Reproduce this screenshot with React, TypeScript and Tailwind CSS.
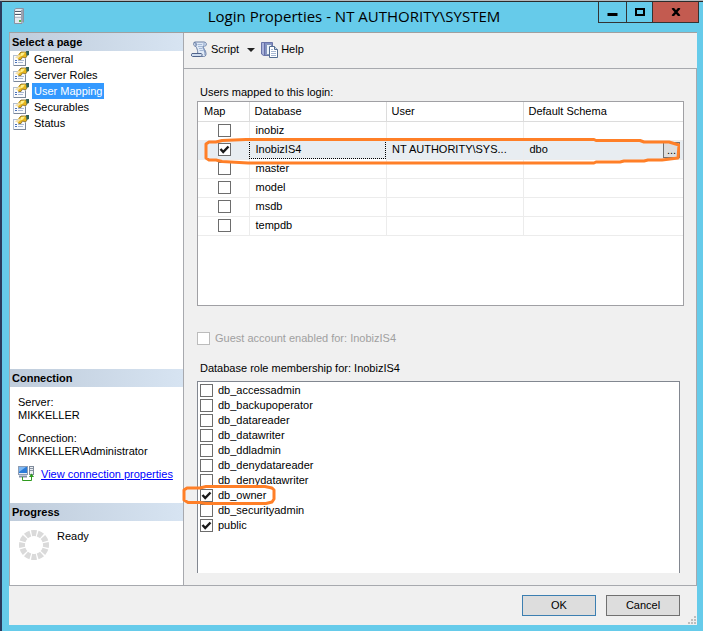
import React, { useState } from 'react';

const pages = ['General', 'Server Roles', 'User Mapping', 'Securables', 'Status'];

const databases = [
    { name: 'inobiz', user: '', schema: '' },
    { name: 'InobizIS4', user: 'NT AUTHORITY\\SYS...', schema: 'dbo' },
    { name: 'master', user: '', schema: '' },
    { name: 'model', user: '', schema: '' },
    { name: 'msdb', user: '', schema: '' },
    { name: 'tempdb', user: '', schema: '' },
];

const roles = [
    'db_accessadmin',
    'db_backupoperator',
    'db_datareader',
    'db_datawriter',
    'db_ddladmin',
    'db_denydatareader',
    'db_denydatawriter',
    'db_owner',
    'db_securityadmin',
    'public',
];

const ServerIcon = () => (
    <svg width="10" height="16" viewBox="0 0 10 16" aria-hidden="true">
        <path d="M0.5 1.5 L2 0.5 H9.5 V14 L8 15.5 H0.5 Z" fill="#e4e8ef" stroke="#8a93a2" />
        <path d="M7 2 L9 1 V14 L7 15 Z" fill="#9aa3b2" />
        <path d="M1 3.5 H7 M1 6.5 H7" stroke="#4d5969" />
        <path d="M1 4.5 H7 M1 7.5 H7" stroke="#ffffff" />
        <path d="M1 9.5 H7" stroke="#b4bcc9" />
        <rect x="5" y="12" width="2" height="2" fill="#55b948" />
    </svg>
);

const PageIcon = () => (
    <svg width="16" height="16" viewBox="0 0 16 16" className="shrink-0" aria-hidden="true">
        <rect x="0.5" y="4.5" width="12" height="10" fill="#fafbfd" stroke="#b3bfd0" />
        <path d="M1 14.5 H13 M12.5 8 V15" stroke="#7b8798" />
        <path d="M2 9.5 H4 M2 11.5 H4" stroke="#4b72b8" />
        <path d="M5 9.5 H11 M5 11.5 H10" stroke="#a9b9d2" />
        <path d="M5 4 L7.5 1 H13.5 L14.5 4.5 L12.5 7 L9.5 6 L8 8.5 L5.5 8.5 L4.5 7 Z" fill="#e8b71c" />
        <path d="M6 3.5 L8 1 H13.5 M14 5 L12.5 7 L9.5 6 L8 8.5 H5.5" fill="none" stroke="#7d6426" strokeWidth="0.8" />
        <path d="M8 2 L12 1.5 L10 4.5 L7 5.5 Z" fill="#fff08a" />
        <path d="M13 0 H16 V4 L13.5 5 Z" fill="#2e5f57" />
        <path d="M2 6.5 L6 3.5 L7.5 5 L5 7.5 Z" fill="#f3dfa6" />
    </svg>
);

const ScriptIcon = () => (
    <svg width="17" height="17" viewBox="0 0 17 17" aria-hidden="true">
        <path d="M3.5 1 H13 C16 1 16 5 14 5 H12 C12 8 15 9 15 12.5 C15 15 14 15.5 12.5 15.5 H5 C8 13 6.5 8.5 5 5.5 C3 5.5 1.5 3 3.5 1 Z" fill="#dfe9f6" stroke="#6a7ea3" />
        <path d="M3 1.5 C5.5 1 6 4 4.5 5.5" fill="#a9bad6" stroke="#6a7ea3" />
        <path d="M12.5 1.5 C11 3 11.5 4.5 14 5 L15 3 Z" fill="#b3c4de" />
        <path d="M12 5.5 C12.5 8.5 14.5 10 14 14" fill="none" stroke="#8398bd" strokeWidth="1.2" />
        <path d="M6.5 3.5 H11 M7 5.5 H11 M8 7.5 H11.5 M8.5 9.5 H12.5" stroke="#94aacb" strokeWidth="0.8" />
        <path d="M1 12.5 H10 C12 13 11 15.5 9.5 15.5 H1.5 C0 15 0 13 1 12.5 Z" fill="#cfdcee" stroke="#4f6289" />
    </svg>
);

const HelpIcon = () => (
    <svg width="17" height="17" viewBox="0 0 17 17" aria-hidden="true">
        <path d="M0.5 1.5 H11.5 V14.5 H2.5 L0.5 13 Z" fill="#8490c5" stroke="#6a74a8" />
        <path d="M1 2 H3 V14 L1 12.5 Z" fill="#aab3db" />
        <path d="M3.5 2 V14" stroke="#6670a6" />
        <path d="M5.5 3.5 H9.5 L11.5 5.5 V13.5 H5.5 Z" fill="#edf3fb" stroke="#8598bb" />
        <path d="M8.5 5.5 H13.5 L16.5 8.5 V16.5 H8.5 Z" fill="#ffffff" stroke="#546d91" />
        <path d="M13.5 5.5 V8.5 H16.5" fill="#ccd9ec" stroke="#546d91" />
        <path d="M10 8.5 H12 M10 10.5 H15 M10 12.5 H15 M10 14.5 H15" stroke="#a5b7d2" />
    </svg>
);

const ConnectionIcon = () => (
    <svg width="16" height="16" viewBox="0 0 16 16" className="shrink-0" aria-hidden="true">
        <rect x="0.5" y="0.5" width="9" height="8" fill="#e3e9f2" stroke="#8d9cb3" />
        <rect x="1" y="1" width="8" height="6" fill="#2b7bd8" />
        <path d="M1 1 H8 L1 6 Z" fill="#7fb8f2" />
        <path d="M1 10.5 H9" stroke="#8290a8" strokeWidth="2" />
        <rect x="11.5" y="0.5" width="4" height="8" fill="#edf0f4" stroke="#808b9b" />
        <path d="M12 2.5 H15 M12 4.5 H15" stroke="#8a95a5" />
        <path d="M4.5 11 V14.5 H13.5 V9" fill="none" stroke="#2f9b1f" />
        <path d="M11 11 L13.5 7.5 L16 11 Z" fill="#2f9b1f" />
    </svg>
);

interface CheckBoxProps {
    id?: string;
    label?: string;
    checked: boolean;
    disabled?: boolean;
    onChange?: () => void;
}

const CheckBox: React.FC<CheckBoxProps> = ({ id, label, checked, disabled, onChange }) => (
    <span className="inline-grid shrink-0 align-middle">
        <input
            id={id}
            type="checkbox"
            aria-label={label}
            checked={checked}
            disabled={disabled}
            onChange={onChange}
            className="peer col-start-1 row-start-1 size-[13px] appearance-none border border-[#6d6d6d] bg-white disabled:border-[#bcbcbc]"
        />
        <svg viewBox="0 0 13 13" className="pointer-events-none invisible col-start-1 row-start-1 size-[13px] peer-checked:visible" aria-hidden="true">
            <path d="M2.5 6 L5.2 9 L10.5 3.5" fill="none" stroke="#1a1a1a" strokeWidth="2.4" />
        </svg>
    </span>
);

const SectionTitle: React.FC<{ children: React.ReactNode }> = ({ children }) => (
    <h2 className="h-[18px] bg-linear-to-r from-[#bfccdb] to-[#d7e4f2] pl-[2px] font-bold leading-[18px]">{children}</h2>
);

export default function App() {
    const [page, setPage] = useState('User Mapping');
    const [mapped, setMapped] = useState(['InobizIS4']);
    const [granted, setGranted] = useState(['db_owner', 'public']);

    const toggle = (list: string[], item: string) =>
        list.includes(item) ? list.filter(i => i !== item) : [...list, item];

    return (
        <div className="flex min-h-screen flex-col border-t border-[#b5b8bb] bg-[#2b3a5c] pl-[2px] font-['Liberation_Sans',Arial,sans-serif] text-[11px] leading-[13px] text-black">
            <div className="flex flex-1 flex-col border-t border-[#2b2b2b] bg-[#66cbea] pr-1.5 pb-1.5 pl-[7px]">

                {/* Title bar */}
                <header className="-mr-[2px] grid h-[30px] grid-cols-[1fr_auto_1fr] items-start">
                    <div className="pt-1.5 pl-[5px]"><ServerIcon /></div>
                    <h1 className="font-['Open_Sans','Noto_Sans',sans-serif] text-[15px] leading-[29px]">
                        Login Properties - NT AUTHORITY\SYSTEM
                    </h1>
                    <div className="flex h-[21px] justify-self-end border border-t-0 border-[#333]">
                        <button aria-label="Minimize" className="flex w-[27px] items-center justify-center">
                            <svg width="11" height="11"><path d="M0.5 7.5 H10.5" stroke="#000" strokeWidth="3" /></svg>
                        </button>
                        <button aria-label="Maximize" className="flex w-[26px] items-center justify-center border-l border-[#333]">
                            <svg width="10" height="8"><rect x="1" y="1" width="8" height="6" fill="none" stroke="#000" strokeWidth="2" /></svg>
                        </button>
                        <button aria-label="Close" className="flex w-[46px] items-center justify-center border-l border-[#333] bg-[#c35b50]">
                            <svg width="10" height="8"><path d="M1.5 0 L8.5 8 M8.5 0 L1.5 8" stroke="#000" strokeWidth="2.4" /></svg>
                        </button>
                    </div>
                </header>

                <div className="flex flex-1 flex-col border-t border-[#a0a0a0] bg-[#f0f0f0]">
                    <div className="flex flex-1 border-b border-l border-[#a7a9ae]">

                        {/* Sidebar */}
                        <aside className="flex w-[174px] shrink-0 flex-col border-r border-[#a7a9ae] bg-white">
                            <SectionTitle>Select a page</SectionTitle>
                            <nav className="flex flex-1 flex-col items-start pl-[3px]">
                                {pages.map(p => (
                                    <button key={p} onClick={() => setPage(p)} className="flex h-4 items-center gap-[3px]">
                                        <PageIcon />
                                        <span className={p === page ? 'bg-[#3399ff] px-[2px] leading-4 text-white' : 'px-[2px] leading-4'}>{p}</span>
                                    </button>
                                ))}
                            </nav>

                            <SectionTitle>Connection</SectionTitle>
                            <div className="h-[116px] pt-[9px] pl-2">
                                <p>Server:</p>
                                <p>MIKKELLER</p>
                                <p className="mt-2.5">Connection:</p>
                                <p>MIKKELLER\Administrator</p>
                                <div className="mt-2 flex items-center gap-[7px]">
                                    <ConnectionIcon />
                                    <a href="#connection" className="text-[#0000ff] underline">View connection properties</a>
                                </div>
                            </div>

                            <SectionTitle>Progress</SectionTitle>
                            <div className="flex h-16 gap-2 pt-[9px] pl-[9px]">
                                <svg width="30" height="30" viewBox="0 0 30 30" aria-hidden="true">
                                    <circle cx="15" cy="15" r="12" fill="none" stroke="#dadada" strokeWidth="6" pathLength="120" strokeDasharray="8 2" strokeDashoffset="4" />
                                </svg>
                                <p>Ready</p>
                            </div>
                        </aside>

                        <main className="flex min-w-0 flex-1 flex-col">
                            <div className="flex h-9 items-center border-b border-[#a7a9ae] pb-[2px] pl-[7px]">
                                <button className="flex items-center gap-[3px]"><ScriptIcon />Script</button>
                                <button aria-label="Script options" className="ml-2">
                                    <svg width="8" height="4"><path d="M0 0 H8 L4 4 Z" fill="#222" /></svg>
                                </button>
                                <button className="ml-[6px] flex items-center gap-[3px]"><HelpIcon />Help</button>
                            </div>

                            <div className="flex flex-1 flex-col border-r border-[#a7a9ae] pt-[17px] pr-3 pb-3 pl-[13px]">
                                <p className="pl-[3px]">Users mapped to this login:</p>
                                <div className="relative mt-[2px] h-[205px] border border-[#a0a0a4] bg-white">
                                    <table className="w-full table-fixed border-collapse text-left">
                                        <thead>
                                            <tr className="h-[19px]">
                                                <th className="w-[51px] border-r border-b border-[#dcdcdc] pl-1.5 font-normal">Map</th>
                                                <th className="w-[137px] border-r border-b border-[#dcdcdc] pl-[5px] font-normal">Database</th>
                                                <th className="w-[137px] border-r border-b border-[#dcdcdc] pl-[5px] font-normal">User</th>
                                                <th className="border-b border-[#dcdcdc] pl-[5px] font-normal">Default Schema</th>
                                            </tr>
                                        </thead>
                                        <tbody>
                                            {databases.map(db => {
                                                const selected = db.name === 'InobizIS4';
                                                return (
                                                    <tr key={db.name} className={selected ? 'h-[19px] bg-[#e8edf1]' : 'h-[19px]'}>
                                                        <td className="border-r border-b border-[#ececec] p-0 pl-[2px] text-center leading-none">
                                                            <CheckBox
                                                                label={`Map ${db.name}`}
                                                                checked={mapped.includes(db.name)}
                                                                onChange={() => setMapped(toggle(mapped, db.name))}
                                                            />
                                                        </td>
                                                        <td className={selected ? 'p-0 pl-1.5 outline-1 -outline-offset-1 outline-dotted outline-black' : 'border-r border-b border-[#ececec] p-0 pl-1.5'}>{db.name}</td>
                                                        <td className="border-r border-b border-[#ececec] p-0 pl-1.5 whitespace-nowrap">{db.user}</td>
                                                        <td className="border-b border-[#ececec] p-0 pl-1.5">
                                                            <div className="flex items-center justify-between">
                                                                {db.schema}
                                                                {selected && (
                                                                    <button aria-label="Browse schemas" className="mr-[3px] h-4 w-[17px] border border-[#707070] bg-[#dddddd] leading-3">...</button>
                                                                )}
                                                            </div>
                                                        </td>
                                                    </tr>
                                                );
                                            })}
                                        </tbody>
                                    </table>
                                    {/* Marker round the mapped database */}
                                    <svg viewBox="0 0 476 28" preserveAspectRatio="none" className="pointer-events-none absolute inset-x-1.5 top-[35px] h-7 w-[calc(100%-9px)]" aria-hidden="true">
                                        <path d="M42 2.5 L18 3.5 L12 5 H5 L2 7 V21 L5 23 H12 L18 24.5 L44 26 H390 L392 25 H416 L420 24 H440 L444 23 H458 L474 21 L475 8 L465 5 H440 L436 3.5 H392 L390 2.5 Z" fill="none" stroke="#ff7f27" strokeWidth="3" strokeLinejoin="round" vectorEffect="non-scaling-stroke" />
                                    </svg>
                                </div>

                                <div className="mt-[26px] flex items-center gap-[5px] text-[#a0a0a0]">
                                    <CheckBox id="guest" checked={false} disabled />
                                    <label htmlFor="guest">Guest account enabled for: InobizIS4</label>
                                </div>

                                <p className="mt-[17px] pl-[3px]">Database role membership for: InobizIS4</p>
                                <div className="relative mt-[6px] mr-1 flex-1 border border-b-0 border-[#828790] bg-white pt-px pl-[2px]">
                                    {roles.map(role => (
                                        <div key={role} className="flex h-[15px] items-center gap-[5px]">
                                            <CheckBox id={role} checked={granted.includes(role)} onChange={() => setGranted(toggle(granted, role))} />
                                            <label htmlFor={role}>{role}</label>
                                        </div>
                                    ))}
                                    {/* Marker round the owner role */}
                                    <svg width="94" height="22" viewBox="0 0 94 22" className="pointer-events-none absolute top-[102px] -left-4" aria-hidden="true">
                                        <path d="M24 2.5 H83 L90 4 L92 6 V15 L90 18 L84 19.5 H24 L18 18.5 H6 L2 16 V6 L5 4 H18 Z" fill="none" stroke="#ff7f27" strokeWidth="3" strokeLinejoin="round" />
                                    </svg>
                                </div>
                            </div>
                        </main>
                    </div>

                    <footer className="flex h-[39px] items-start justify-end gap-2.5 pt-[9px]">
                        <button className="h-[21px] w-[74px] border border-[#3c7fb1] bg-[#dddddd]">OK</button>
                        <button className="h-[21px] w-[74px] border border-[#707070] bg-[#dddddd]">Cancel</button>
                        <svg width="8" height="8" className="-ml-[2px] mr-px self-end mb-px" aria-hidden="true">
                            <path d="M6 0 H8 V2 H6 Z M3 3 H5 V5 H3 Z M6 3 H8 V5 H6 Z M0 6 H2 V8 H0 Z M3 6 H5 V8 H3 Z M6 6 H8 V8 H6 Z" fill="#bdbdbd" />
                        </svg>
                    </footer>
                </div>
            </div>
        </div>
    );
}
